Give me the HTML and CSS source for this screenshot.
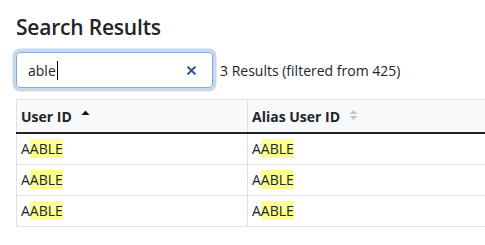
FILE: index.html
```html
<!DOCTYPE html>
<html lang="en">
<head>
<meta charset="utf-8">
<title>Search Results</title>
<link rel="stylesheet" href="styles.css">
</head>
<body>
<div class="page">
  <h1 class="title">Search Results</h1>
  <div class="search-bar">
    <div class="search-box">
      <span class="search-value">able</span><span class="caret"></span>
      <svg class="clear" width="9" height="9" viewBox="0 0 9 9"><path d="M1.2 1.2 L7.8 7.8 M7.8 1.2 L1.2 7.8" stroke="#3b5582" stroke-width="2.1" stroke-linecap="round"/></svg>
    </div>
    <span class="result-count">3 Results (filtered from 425)</span>
  </div>
  <div class="table-wrap">
    <table class="results">
      <thead>
        <tr>
          <th class="col-user"><span class="th-label">User ID</span><svg class="sort" width="9" height="12" viewBox="0 0 9 12"><path d="M0.5 6 L4.5 1.5 L8.5 6 Z" fill="#111"/></svg></th>
          <th class="col-alias"><span class="th-label">Alias User ID</span><svg class="sort" width="9" height="12" viewBox="0 0 9 12"><path d="M0.5 5 L4.5 1 L8.5 5 Z M0.5 7 L4.5 11 L8.5 7 Z" fill="#c4c6c8"/></svg></th>
        </tr>
      </thead>
      <tbody>
        <tr><td>A<mark>ABLE</mark></td><td>A<mark>ABLE</mark></td></tr>
        <tr><td>A<mark>ABLE</mark></td><td>A<mark>ABLE</mark></td></tr>
        <tr><td>A<mark>ABLE</mark></td><td>A<mark>ABLE</mark></td></tr>
      </tbody>
    </table>
  </div>
</div>
</body>
</html>
```
FILE: styles.css
```css
html, body {
  margin: 0;
  padding: 0;
  overflow: hidden;
  background: #fff;
}
body {
  font-family: "Open Sans", "Noto Sans", sans-serif;
  font-size: 14px;
  color: #212529;
}
.page {
  padding: 13px 0 0 16px;
}
.title {
  margin: 0 0 10px 0;
  font-size: 21px;
  font-weight: 600;
  line-height: 29px;
  letter-spacing: -0.2px;
}
.search-bar {
  display: flex;
  align-items: center;
  gap: 7px;
}
.search-box {
  box-sizing: border-box;
  width: 197px;
  height: 36px;
  border: 1px solid #86a9d3;
  border-radius: 4px;
  box-shadow: 0 0 0 3.5px #c6d8ec;
  display: flex;
  align-items: center;
  padding: 0 16px 0 11px;
}
.search-value {
  font-size: 14px;
  color: #212529;
}
.caret {
  display: inline-block;
  width: 1px;
  height: 19px;
  background: #000;
  margin-left: 1px;
}
.clear {
  margin-left: auto;
}
.result-count {
  font-size: 14px;
}
.table-wrap {
  margin-top: 11px;
  overflow: hidden;
}
.results {
  border-collapse: collapse;
  width: 640px;
  table-layout: fixed;
}
.results th, .results td {
  border: 1px solid #dee2e6;
  text-align: left;
  padding: 4px 4px;
  line-height: 22px;
}
.results th {
  background: #f8f9fa;
  font-weight: 700;
  border-bottom: 2px solid #212529;
  padding: 5px 4px 4px 4px;
}
.col-user {
  width: 222px;
}
.th-label {
  vertical-align: middle;
}
.sort {
  vertical-align: middle;
  margin-left: 9px;
  position: relative;
  top: -2px;
}
mark {
  background: #ffff8f;
  color: inherit;
  padding: 0;
}
```
